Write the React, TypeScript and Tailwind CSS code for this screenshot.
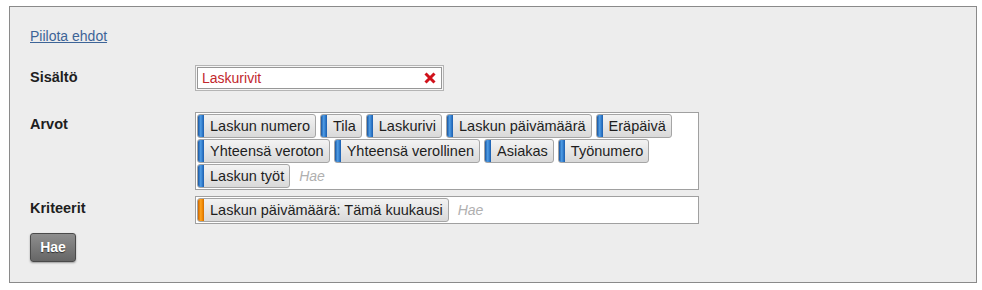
import React from "react";

const FONT = { fontFamily: '"Liberation Sans", Arial, sans-serif' };

function Tag({ label, color = "blue" }: { label: string; color?: "blue" | "orange" }) {
  const strip =
    color === "blue"
      ? "bg-[linear-gradient(to_right,#1a56a0_0%,#4f9de6_45%,#2a72c2_80%,#1d5fae_100%)]"
      : "bg-[linear-gradient(to_right,#c96400_0%,#ffa41f_45%,#ec8300_80%,#d06c00_100%)]";
  return (
    <div className="flex h-[24px] overflow-hidden rounded-[3px] border border-[#a5a5a5] bg-[linear-gradient(to_bottom,#f3f3f3,#d9d9d9)]">
      <span className={`w-[6px] shrink-0 ${strip}`} />
      <span className="flex items-center pl-[6px] pr-[5px] text-[14.5px] leading-none text-[#1e1e1e]">{label}</span>
    </div>
  );
}

function Row({ label, children, mt }: { label: string; children: React.ReactNode; mt: string }) {
  return (
    <div className={`flex ${mt}`}>
      <div className="w-[165px] shrink-0 pt-[2px] text-[14.5px] font-bold leading-[20px] text-[#1e1e1e]">{label}</div>
      {children}
    </div>
  );
}

export default function App() {
  const arvot = [
    "Laskun numero",
    "Tila",
    "Laskurivi",
    "Laskun päivämäärä",
    "Eräpäivä",
    "Yhteensä veroton",
    "Yhteensä verollinen",
    "Asiakas",
    "Työnumero",
    "Laskun työt",
  ];
  return (
    <div className="min-h-[290px] bg-white pt-[6px]" style={FONT}>
      <div className="ml-[9px] w-[968px] border border-[#8a8a8a] bg-[#ededed] pb-[20px] pl-[20px] pt-[19px]">
        <div className="h-[20px] text-[14px] leading-[20px]">
          <a href="#" className="text-[#3d6497] underline">Piilota ehdot</a>
        </div>

        <Row label="Sisältö" mt="mt-[19px]">
          <div className="h-[26px] w-[249px] border border-[#b4b4b4] bg-[#f6f6f6] p-px">
            <div className="flex h-full items-center justify-between border border-[#979797] bg-white pl-[4px] pr-[5px]">
              <span className="text-[14px] leading-none text-[#c2272d]">Laskurivit</span>
              <svg width="12" height="12" viewBox="0 0 12 12">
                <path d="M1.5 1.5 L10.5 10.5 M10.5 1.5 L1.5 10.5" stroke="#d0121b" strokeWidth="3" strokeLinecap="butt" />
              </svg>
            </div>
          </div>
        </Row>

        <Row label="Arvot" mt="mt-[21px]">
          <div className="flex w-[504px] flex-wrap content-start gap-x-[4px] gap-y-[1px] border border-[#a0a0a0] bg-white p-px">
            {arvot.map((a) => (
              <Tag key={a} label={a} />
            ))}
            <span className="flex h-[24px] items-center pl-[5px] text-[14px] italic text-[#b0b0b0]">Hae</span>
          </div>
        </Row>

        <Row label="Kriteerit" mt="mt-[6px]">
          <div className="flex w-[504px] gap-x-[4px] border border-[#a0a0a0] bg-white p-px">
            <Tag label="Laskun päivämäärä: Tämä kuukausi" color="orange" />
            <span className="flex h-[24px] items-center pl-[5px] text-[14px] italic text-[#b0b0b0]">Hae</span>
          </div>
        </Row>

        <div className="mt-[9px]">
          <button className="flex h-[29px] w-[46px] items-center justify-center rounded-[3px] border border-[#4a4a4a] bg-[linear-gradient(to_bottom,#8e8e8e,#666666)] text-[14px] font-bold text-white shadow-[0_1px_2px_rgba(0,0,0,0.35)] [text-shadow:0_1px_1px_rgba(0,0,0,0.6)]">
            Hae
          </button>
        </div>
      </div>
    </div>
  );
}
